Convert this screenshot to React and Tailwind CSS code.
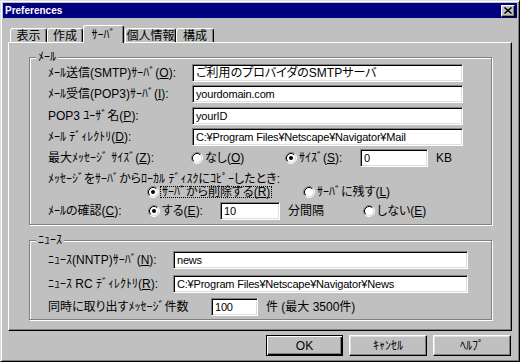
const U = ({ children }) => <span className="underline underline-offset-1">{children}</span>;

const Radio = ({ checked }) => (
  <svg width="12" height="12" viewBox="0 0 12 12" className="shrink-0">
    <circle cx="6" cy="6" r="4.5" fill="#fff" />
    <path d="M2.11 9.89A5.5 5.5 0 0 1 9.89 2.11" stroke="#808080" fill="none" />
    <path d="M9.89 2.11A5.5 5.5 0 0 1 2.11 9.89" stroke="#fff" fill="none" />
    <path d="M2.82 9.18A4.5 4.5 0 0 1 9.18 2.82" stroke="#000" fill="none" />
    <path d="M9.18 2.82A4.5 4.5 0 0 1 2.82 9.18" stroke="#dfdfdf" fill="none" />
    {checked && <circle cx="6" cy="6" r="2" fill="#000" />}
  </svg>
);

const Field = ({ value, className = "" }) => (
  <div
    className={`flex h-[18px] items-center overflow-hidden whitespace-nowrap border border-[#808080] border-b-white border-r-white bg-white pl-[3px] text-[11px] leading-none tracking-[-0.2px] shadow-[inset_1px_1px_0_#000,inset_-1px_-1px_0_#dfdfdf] ${className}`}
  >
    {value}
  </div>
);

const Group = ({ title, className = "", children }) => (
  <div className={`relative border border-[#808080] shadow-[inset_1px_1px_0_#fff,1px_1px_0_#fff] ${className}`}>
    <span className="absolute -top-[8px] left-[6px] bg-[#c0c0c0] px-[2px] text-[12px] leading-[14px]">{title}</span>
    {children}
  </div>
);

const Tab = ({ label, selected, className = "" }) => (
  <div
    className={`flex items-center justify-center rounded-t-[3px] border border-b-0 border-white border-r-black bg-[#c0c0c0] text-[12px] leading-none shadow-[inset_-1px_0_0_#808080] ${
      selected ? "-mb-px h-[18px]" : "h-[14px]"
    } ${className}`}
  >
    {label}
  </div>
);

const Button = ({ label, primary }) => (
  <div
    className={`flex h-[21px] items-center justify-center text-[12px] leading-none ${
      primary
        ? "w-[77px] border border-black shadow-[inset_1px_1px_0_#fff,inset_-1px_-1px_0_#000,inset_-2px_-2px_0_#808080]"
        : "w-[78px] border border-white border-b-black border-r-black shadow-[inset_-1px_-1px_0_#808080,inset_1px_1px_0_#dfdfdf]"
    }`}
  >
    {label}
  </div>
);

export default function App() {
  return (
    <div className="h-[362px] w-[520px] overflow-hidden whitespace-nowrap border border-[#dfdfdf] border-b-black border-r-black bg-[#c0c0c0] p-[2px] font-['Liberation_Sans','Noto_Sans_CJK_JP',sans-serif] text-black shadow-[inset_1px_1px_0_#fff,inset_-1px_-1px_0_#808080] [font-feature-settings:'palt']">
      {/* title bar */}
      <div className="flex h-[15px] items-center justify-between bg-[#000080] pl-[2px] pr-[2px]">
        <span className="text-[10px] font-bold leading-none text-white">Preferences</span>
        <div className="flex h-[12px] w-[14px] items-center justify-center border border-white border-b-black border-r-black bg-[#c0c0c0] shadow-[inset_-1px_-1px_0_#808080]">
          <svg width="8" height="7" viewBox="0 0 8 7">
            <path d="M0.5 0.5L7.5 6.5M7.5 0.5L0.5 6.5" stroke="#000" strokeWidth="1.5" />
          </svg>
        </div>
      </div>

      {/* tabs */}
      <div className="relative z-10 ml-[5px] mt-[7px] flex items-end">
        <Tab label="表示" className="ml-[2px] w-[37px]" />
        <Tab label="作成" className="w-[36px]" />
        <Tab label="ｻｰﾊﾞ" selected className="w-[41px]" />
        <Tab label="個人情報" className="ml-[1px] w-[51px]" />
        <Tab label="構成" className="w-[38px]" />
      </div>

      {/* panel */}
      <div className="mx-[5px] h-[289px] border border-white border-b-black border-r-black text-[12px] leading-none shadow-[inset_-1px_-1px_0_#808080]">
        <Group title="ﾒｰﾙ" className="ml-[20px] mr-[19px] mt-[14px] h-[168px] pl-[18px]">
          <div className="mt-[6px] flex h-[18px] items-center">
            <span className="w-[144px]">ﾒｰﾙ送信(SMTP)ｻｰﾊﾞ(<U>O</U>):</span>
            <Field value="ご利用のプロバイダのSMTPサーバ" className="w-[271px] text-[12px] tracking-normal" />
          </div>
          <div className="mt-[3px] flex h-[18px] items-center">
            <span className="w-[144px]">ﾒｰﾙ受信(POP3)ｻｰﾊﾞ(<U>I</U>):</span>
            <Field value="yourdomain.com" className="w-[271px]" />
          </div>
          <div className="mt-[4px] flex h-[18px] items-center">
            <span className="w-[144px]">POP3 ﾕｰｻﾞ名(<U>P</U>):</span>
            <Field value="yourID" className="w-[271px]" />
          </div>
          <div className="mt-[3px] flex h-[18px] items-center">
            <span className="w-[144px]">ﾒｰﾙ ﾃﾞｨﾚｸﾄﾘ(<U>D</U>):</span>
            <Field value="C:¥Program Files¥Netscape¥Navigator¥Mail" className="w-[271px]" />
          </div>
          <div className="mt-[3px] flex h-[18px] items-center">
            <span className="w-[143px]">最大ﾒｯｾｰｼﾞ ｻｲｽﾞ(<U>Z</U>):</span>
            <div className="flex w-[94px] items-center gap-[2px]">
              <Radio />
              <span>なし(<U>O</U>)</span>
            </div>
            <div className="flex w-[75px] items-center gap-[2px]">
              <Radio checked />
              <span>ｻｲｽﾞ(<U>S</U>):</span>
            </div>
            <Field value="0" className="w-[68px]" />
            <span className="ml-[8px]">KB</span>
          </div>
          <div className="mt-[5px] flex h-[13px] items-center">ﾒｯｾｰｼﾞをｻｰﾊﾞからﾛｰｶﾙ ﾃﾞｨｽｸにｺﾋﾟｰしたとき:</div>
          <div className="flex h-[13px] items-center">
            <div className="ml-[99px] flex w-[156px] items-center">
              <Radio checked />
              <span className="ml-[1px] flex h-[12px] items-center border border-dotted border-black px-[1px]">
                ｻｰﾊﾞから削除する(<U>R</U>)
              </span>
            </div>
            <div className="flex items-center gap-[2px]">
              <Radio />
              <span>ｻｰﾊﾞに残す(<U>L</U>)</span>
            </div>
          </div>
          <div className="mt-[4px] flex h-[18px] items-center">
            <span className="w-[100px]">ﾒｰﾙの確認(<U>C</U>):</span>
            <div className="flex w-[72px] items-center gap-[2px]">
              <Radio checked />
              <span>する(<U>E</U>):</span>
            </div>
            <Field value="10" className="w-[60px]" />
            <span className="ml-[8px] w-[75px]">分間隔</span>
            <div className="flex items-center gap-[2px]">
              <Radio />
              <span>しない(<U>E</U>)</span>
            </div>
          </div>
        </Group>

        <Group title="ﾆｭｰｽ" className="ml-[20px] mr-[19px] mt-[15px] h-[80px] pl-[18px]">
          <div className="mt-[10px] flex h-[18px] items-center">
            <span className="w-[125px]">ﾆｭｰｽ(NNTP)ｻｰﾊﾞ(<U>N</U>):</span>
            <Field value="news" className="w-[295px]" />
          </div>
          <div className="mt-[6px] flex h-[18px] items-center">
            <span className="w-[125px]">ﾆｭｰｽ RC ﾃﾞｨﾚｸﾄﾘ(<U>R</U>):</span>
            <Field value="C:¥Program Files¥Netscape¥Navigator¥News" className="w-[295px]" />
          </div>
          <div className="mt-[5px] flex h-[18px] items-center">
            <span className="w-[163px]">同時に取り出すﾒｯｾｰｼﾞ件数</span>
            <Field value="100" className="w-[47px]" />
            <span className="ml-[8px]">件 (最大 3500件)</span>
          </div>
        </Group>
      </div>

      {/* buttons */}
      <div className="mr-[6px] mt-[4px] flex justify-end gap-[6px]">
        <Button label="OK" primary />
        <Button label="ｷｬﾝｾﾙ" />
        <Button label="ﾍﾙﾌﾟ" />
      </div>
    </div>
  );
}
